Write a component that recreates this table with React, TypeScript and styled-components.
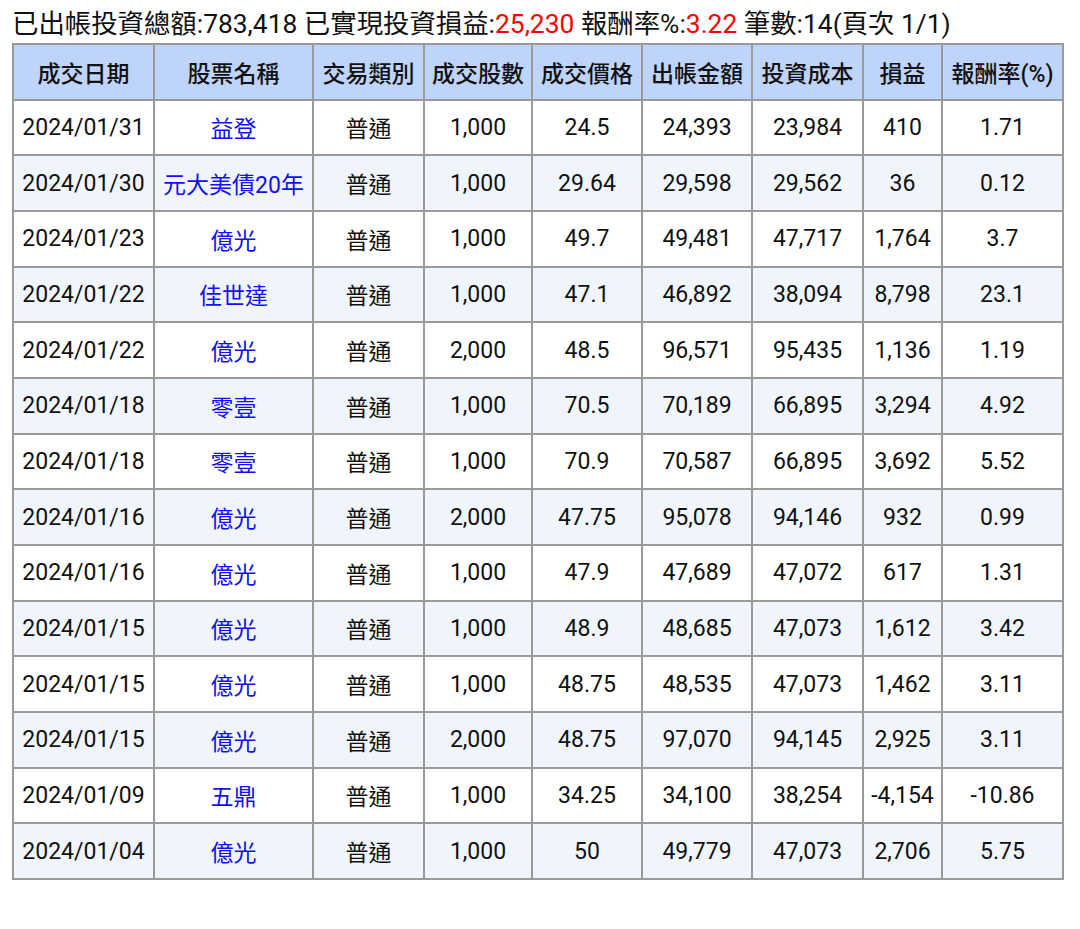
import React from "react";
import styled, { createGlobalStyle } from "styled-components";

const Global = createGlobalStyle`
  html, body { margin: 0; padding: 0; background: #fff; }
  body { font-family: Roboto, "Noto Sans CJK TC", sans-serif; color: #111; }
`;

const Page = styled.div`
  padding: 8px 12px 0 12px;
`;

const Summary = styled.div`
  font-size: 26.4px;
  line-height: 32px;
  height: 35px;
  white-space: nowrap;
`;

const Red = styled.span`
  color: #f00;
`;

const Table = styled.table`
  border-collapse: collapse;
  table-layout: fixed;
  width: 1050px;
  font-size: 23px;
  border: 2px solid #9a9a9a;
`;

const Row = styled.tr<{ $alt?: boolean }>`
  height: 55.67px;
  background: ${(p) => (p.$alt ? "#f0f5fc" : "#fff")};
`;

const HeadRow = styled.tr`
  height: 55.67px;
  background: #bfd4fa;
`;

const Th = styled.th`
  border: 2px solid #9a9a9a;
  font-weight: 500;
  padding: 0;
  text-align: center;
  white-space: nowrap;
`;

const Td = styled.td`
  border: 2px solid #9a9a9a;
  padding: 0;
  text-align: center;
  white-space: nowrap;
`;

const StockLink = styled.a`
  color: #1010f0;
  text-decoration: none;
`;

const widths = [141, 159, 111, 108, 110, 110, 111, 79, 121];
const heads = ["成交日期", "股票名稱", "交易類別", "成交股數", "成交價格", "出帳金額", "投資成本", "損益", "報酬率(%)"];

const rows: string[][] = [
  ["2024/01/31", "益登", "普通", "1,000", "24.5", "24,393", "23,984", "410", "1.71"],
  ["2024/01/30", "元大美債20年", "普通", "1,000", "29.64", "29,598", "29,562", "36", "0.12"],
  ["2024/01/23", "億光", "普通", "1,000", "49.7", "49,481", "47,717", "1,764", "3.7"],
  ["2024/01/22", "佳世達", "普通", "1,000", "47.1", "46,892", "38,094", "8,798", "23.1"],
  ["2024/01/22", "億光", "普通", "2,000", "48.5", "96,571", "95,435", "1,136", "1.19"],
  ["2024/01/18", "零壹", "普通", "1,000", "70.5", "70,189", "66,895", "3,294", "4.92"],
  ["2024/01/18", "零壹", "普通", "1,000", "70.9", "70,587", "66,895", "3,692", "5.52"],
  ["2024/01/16", "億光", "普通", "2,000", "47.75", "95,078", "94,146", "932", "0.99"],
  ["2024/01/16", "億光", "普通", "1,000", "47.9", "47,689", "47,072", "617", "1.31"],
  ["2024/01/15", "億光", "普通", "1,000", "48.9", "48,685", "47,073", "1,612", "3.42"],
  ["2024/01/15", "億光", "普通", "1,000", "48.75", "48,535", "47,073", "1,462", "3.11"],
  ["2024/01/15", "億光", "普通", "2,000", "48.75", "97,070", "94,145", "2,925", "3.11"],
  ["2024/01/09", "五鼎", "普通", "1,000", "34.25", "34,100", "38,254", "-4,154", "-10.86"],
  ["2024/01/04", "億光", "普通", "1,000", "50", "49,779", "47,073", "2,706", "5.75"],
];

export default function App() {
  return (
    <>
      <Global />
      <Page>
        <Summary>
          已出帳投資總額:783,418 已實現投資損益:<Red>25,230</Red> 報酬率%:<Red>3.22</Red> 筆數:14(頁次 1/1)
        </Summary>
        <Table>
          <colgroup>
            {widths.map((w, i) => (
              <col key={i} style={{ width: w }} />
            ))}
          </colgroup>
          <thead>
            <HeadRow>
              {heads.map((h) => (
                <Th key={h}>{h}</Th>
              ))}
            </HeadRow>
          </thead>
          <tbody>
            {rows.map((r, i) => (
              <Row key={i} $alt={i % 2 === 1}>
                {r.map((c, j) => (
                  <Td key={j}>{j === 1 ? <StockLink href="#">{c}</StockLink> : c}</Td>
                ))}
              </Row>
            ))}
          </tbody>
        </Table>
      </Page>
    </>
  );
}
